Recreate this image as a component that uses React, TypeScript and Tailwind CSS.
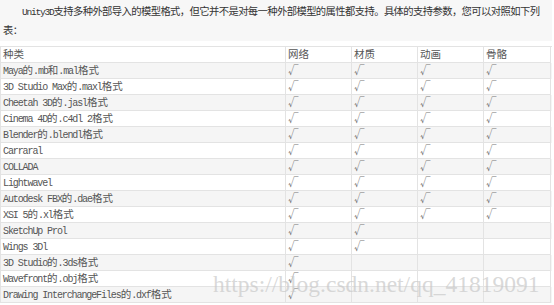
import React from "react";

const rows: [string, number][] = [
  ["Maya的.mb和.mal格式", 4],
  ["3D Studio Max的.maxl格式", 4],
  ["Cheetah 3D的.jasl格式", 4],
  ["Cinema 4D的.c4dl 2格式", 4],
  ["Blender的.blendl格式", 4],
  ["Carraral", 4],
  ["COLLADA", 4],
  ["Lightwavel", 4],
  ["Autodesk FBX的.dae格式", 4],
  ["XSI 5的.xl格式", 4],
  ["SketchUp Prol", 2],
  ["Wings 3Dl", 2],
  ["3D Studio的.3ds格式", 1],
  ["Wavefront的.obj格式", 1],
  ["Drawing InterchangeFiles的.dxf格式", 1],
];

const cjk = /([\u3000-\u303f\u4e00-\u9fff\uff00-\uffef]+)/;

// latin runs get a half-width mono look, CJK runs stay full width
function Mixed({ text, small }: { text: string; small?: boolean }) {
  return (
    <span className="whitespace-nowrap text-[10px] leading-none">
      {text.split(cjk).map((part, i) =>
        part === "" ? null : cjk.test(part) ? (
          <span key={i} className={small ? "text-[10.3px] tracking-[-0.58px]" : "text-[10.5px]"}>
            {part}
          </span>
        ) : (
          <span
            key={i}
            className={
              small
                ? "font-['Liberation_Mono',monospace] text-[9.5px] tracking-[-1.2px]"
                : "font-['Liberation_Mono',monospace] text-[10px] tracking-[-1.1px]"
            }
          >
            {part}
          </span>
        )
      )}
    </span>
  );
}

function Check() {
  return <span className="text-[10.5px] leading-none text-[#777]">√</span>;
}

export default function App() {
  const head = ["种类", "网络", "材质", "动画", "骨骼"];
  return (
    <div className="relative h-[305px] w-[554px] overflow-hidden bg-white font-['Noto_Sans_CJK_SC',sans-serif] text-[#333]">
      <div className="h-[41px] w-[552px] bg-[#f7f7f7] pt-[3px]">
        <div className="flex h-[18px] items-center pl-[22px]">
          <Mixed small text="Unity3D支持多种外部导入的模型格式，但它并不是对每一种外部模型的属性都支持。具体的支持参数，您可以对照如下列" />
        </div>
        <div className="flex h-[18px] items-center pl-[3px]">
          <Mixed small text="表：" />
        </div>
      </div>

      <div className="mt-[5px] w-[552px] border-l border-t border-[#e3e3e3] text-[#555]">
        <div className="grid h-4 grid-cols-[285px_66px_66px_66px_67px] bg-white">
          {head.map((h) => (
            <div key={h} className="flex items-center border-b border-r border-[#e3e3e3] pl-[2px] text-[10.5px] leading-none">
              {h}
            </div>
          ))}
        </div>
        {rows.map(([name, n], i) => (
          <div
            key={name}
            className={
              i % 2 === 0
                ? "grid h-4 grid-cols-[285px_66px_66px_66px_67px] bg-[#f5f5f5]"
                : "grid h-4 grid-cols-[285px_66px_66px_66px_67px] bg-white"
            }
          >
            <div className="flex items-center border-b border-r border-[#e3e3e3] pl-[2px]">
              <Mixed text={name} />
            </div>
            {[0, 1, 2, 3].map((c) => (
              <div key={c} className="flex items-center border-b border-r border-[#e3e3e3] pl-[2px]">
                {c < n ? <Check /> : null}
              </div>
            ))}
          </div>
        ))}
      </div>

      <div className="pointer-events-none absolute left-[213px] top-[273px] whitespace-nowrap font-['Liberation_Serif',serif] text-[23.5px] leading-none text-[#c8c8c8]/70">
        https://blog.csdn.net/qq_41819091
      </div>
    </div>
  );
}
